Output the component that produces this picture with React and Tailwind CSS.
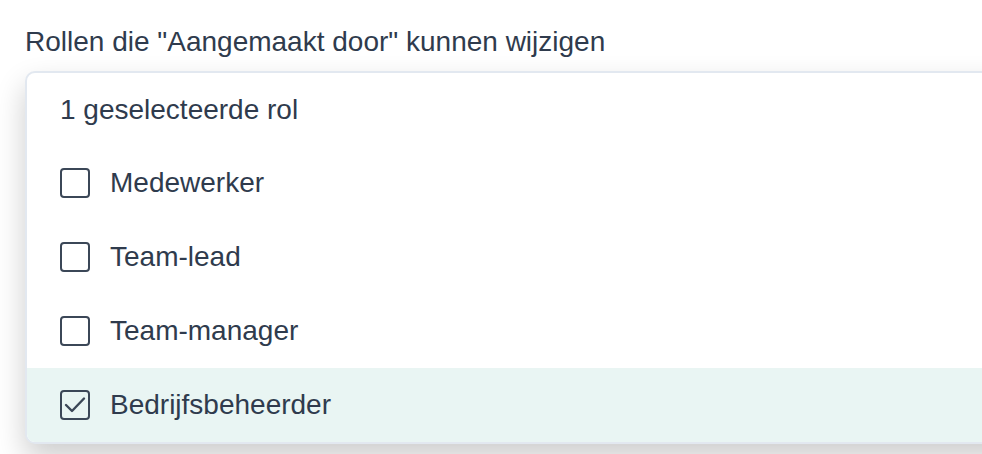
const roles = [
  { name: 'Medewerker', checked: false },
  { name: 'Team-lead', checked: false },
  { name: 'Team-manager', checked: false },
  { name: 'Bedrijfsbeheerder', checked: true },
];

const Checkbox = ({ checked }) => (
  <div className="w-[30px] h-[30px] rounded-[4px] border-2 border-[#3b4757] flex items-center justify-center shrink-0">
    {checked && (
      <svg width="26" height="26" viewBox="0 0 26 26" fill="none" className="shrink-0">
        <path d="M4 13 L10 19 L22 6.5" stroke="#3b4757" strokeWidth="2.4" strokeLinecap="round" strokeLinejoin="round" />
      </svg>
    )}
  </div>
);

export default function App() {
  return (
    <div className="w-[982px] h-[454px] overflow-hidden bg-white pl-[25px] pt-[25px] text-[#2f3b4d]" style={{ fontFamily: '"Liberation Sans", Arial, sans-serif' }}>
      <div className="text-[28px] leading-[34px]">Rollen die "Aangemaakt door" kunnen wijzigen</div>
      <div className="mt-[12px] w-[1000px] rounded-[10px] border-2 border-[#e2e8f0] bg-white overflow-hidden shadow-[0_14px_30px_rgba(0,0,0,0.2)]">
        <div className="h-[73px] flex items-center pl-[33px] text-[28px]">1 geselecteerde rol</div>
        {roles.map((role) => (
          <div
            key={role.name}
            className={`h-[74px] flex items-center gap-[20px] pl-[33px] text-[28px] ${role.checked ? 'bg-[#e9f5f3]' : 'bg-white'}`}
          >
            <Checkbox checked={role.checked} />
            <span>{role.name}</span>
          </div>
        ))}
      </div>
    </div>
  );
}
